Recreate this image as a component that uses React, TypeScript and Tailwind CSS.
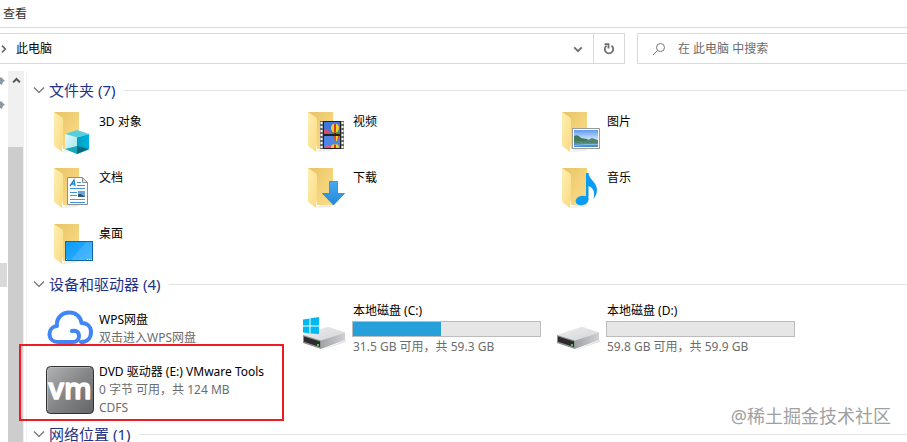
import React, { useState } from 'react';

type FolderKind = 'objects' | 'video' | 'picture' | 'document' | 'download' | 'music' | 'desktop';

interface Folder {
  name: string;
  kind: FolderKind;
}

const FOLDERS: Folder[] = [
  { name: '3D 对象', kind: 'objects' },
  { name: '视频', kind: 'video' },
  { name: '图片', kind: 'picture' },
  { name: '文档', kind: 'document' },
  { name: '下载', kind: 'download' },
  { name: '音乐', kind: 'music' },
  { name: '桌面', kind: 'desktop' },
];

// Gradients shared by all icons
const IconDefs: React.FC = () => (
  <svg width="0" height="0" className="absolute" aria-hidden="true">
    <defs>
      <linearGradient id="folderBack" x1="0" y1="0" x2="1" y2="1">
        <stop offset="0" stopColor="#e9c365" />
        <stop offset="1" stopColor="#fbdf8c" />
      </linearGradient>
      <linearGradient id="folderFlap" x1="0" y1="0" x2="1" y2="1">
        <stop offset="0" stopColor="#ffefb4" />
        <stop offset="1" stopColor="#f9da80" />
      </linearGradient>
      <linearGradient id="cubeLeft" x1="0" y1="0" x2="1" y2="1">
        <stop offset="0" stopColor="#e2fafb" />
        <stop offset="1" stopColor="#9be5ee" />
      </linearGradient>
      <linearGradient id="cubeRight" x1="0" y1="0" x2="1" y2="0">
        <stop offset="0" stopColor="#009fbd" />
        <stop offset="1" stopColor="#00b3e3" />
      </linearGradient>
      <linearGradient id="sky" x1="0" y1="0" x2="0" y2="1">
        <stop offset="0" stopColor="#5c9af0" />
        <stop offset="0.6" stopColor="#d9ebfb" />
        <stop offset="1" stopColor="#4f92c8" />
      </linearGradient>
      <linearGradient id="arrow" x1="0" y1="0" x2="0" y2="1">
        <stop offset="0" stopColor="#46aaf0" />
        <stop offset="1" stopColor="#2189dd" />
      </linearGradient>
      <linearGradient id="screen" x1="0" y1="0" x2="1" y2="1">
        <stop offset="0" stopColor="#0a9bfa" />
        <stop offset="1" stopColor="#35b0ff" />
      </linearGradient>
      <linearGradient id="driveTop" x1="0" y1="0" x2="1" y2="1">
        <stop offset="0" stopColor="#eeeef0" />
        <stop offset="1" stopColor="#d3d4d7" />
      </linearGradient>
      <linearGradient id="driveSide" x1="0" y1="0" x2="1" y2="0">
        <stop offset="0" stopColor="#a2a3a6" />
        <stop offset="1" stopColor="#cfd0d3" />
      </linearGradient>
      <linearGradient id="vmBody" x1="0" y1="0" x2="1" y2="1">
        <stop offset="0" stopColor="#b2b3b5" />
        <stop offset="0.5" stopColor="#858688" />
        <stop offset="1" stopColor="#636466" />
      </linearGradient>
    </defs>
  </svg>
);

const FolderBadge: React.FC<{ kind: FolderKind }> = ({ kind }) => {
  switch (kind) {
    case 'objects':
      return (
        <g>
          <path d="M19 41l12 5 14-4-4-2z" fill="#e3e3e3" />
          <path d="M31 22l12 4-12 3.5L19 26z" fill="#55cfe0" />
          <path d="M19 26l12 3.5V46l-12-5z" fill="url(#cubeLeft)" />
          <path d="M43 26l-12 3.5V46l12-5z" fill="url(#cubeRight)" />
          <path d="M31 38l-12 3 12 5z" fill="#17a9b5" />
          <path d="M31 38l12 3-12 5z" fill="#006b80" />
        </g>
      );
    case 'video':
      return (
        <g>
          <rect x="20" y="13" width="24" height="28" fill="#6b6b6b" />
          <rect x="23" y="13" width="18" height="28" fill="#222" />
          <rect x="24" y="14" width="16" height="12" fill="#3c78dc" />
          <rect x="24" y="28" width="16" height="12" fill="#4b88e6" />
          <path d="M24 22q3-2 5 1l3 3h-8z" fill="#d04f77" />
          <path d="M29 26q5-4 11-2v2z" fill="#3f963c" />
          <ellipse cx="35" cy="20" rx="4" ry="4.5" fill="#f4cf24" />
          <path d="M34 15.500h2v9h-2z" fill="#d9352c" />
          <path d="M34 25h2v1h-2z" fill="#442c20" />
          <path d="M33 28h7l-3 5h-2z" fill="#e24635" />
          <path d="M36 28h2l-1 5h-1z" fill="#f5d62f" />
          <path d="M24 39q4-3 8-1v2h-8z" fill="#e6548c" />
          <path d="M31 40a4 4 0 0 1 8 0z" fill="#f4cf24" />
          <path d="M34 36.500h2V40h-2z" fill="#d9352c" />
          <path d="M21.500 14v27M42.500 14v27" stroke="#fafafa" strokeWidth="2" strokeDasharray="2 2" />
        </g>
      );
    case 'picture':
      return (
        <g>
          <rect x="18.500" y="20.500" width="27" height="20" fill="#fff" stroke="#9b9b9b" />
          <rect x="20" y="22" width="24" height="17" fill="url(#sky)" />
          <path d="M20 28q4-2 7 2l6 1 5 3h-18z" fill="#3f7a5c" />
          <path d="M32 33l6-3 6 2v3H20v-2z" fill="#52856f" />
          <path d="M20 35h24v4H20z" fill="#4c8ec6" />
          <path d="M20 37.500l12-1h12" stroke="#88bde4" fill="none" />
        </g>
      );
    case 'document':
      return (
        <g>
          <path d="M21.500 13.500h15l5 5v22h-20z" fill="#fff" stroke="#8c8c8c" />
          <path d="M36.500 13.500v5h5z" fill="#e8e8e8" stroke="#8c8c8c" />
          <path d="M24 22l4-6 1 6M25.500 20h3" stroke="#1d83cf" strokeWidth="1.400" fill="none" />
          <path d="M31 18.500h4M31 21.500h8M24 24.500h15M24 28.500h7M24 31.500h7M24 38.500h15" stroke="#3d96d8" />
          <path d="M24 35.500h15" stroke="#8b8b8b" />
          <rect x="32" y="27" width="7" height="6" fill="#6fa7dc" />
          <path d="M32 30l3 0 4 3h-7z" fill="#2e5871" />
        </g>
      );
    case 'download':
      return <path d="M29.500 17.500h8v12h7L33.500 41 22.500 29.500h7z" fill="url(#arrow)" stroke="#1c7cc9" strokeWidth="0.700" />;
    case 'music':
      return (
        <g fill="#0a9bf5">
          <ellipse cx="28" cy="36.500" rx="6.500" ry="4.700" transform="rotate(-12 28 36.5)" />
          <path d="M32 9h2.500c0 6 8.500 9 8.500 17 0 4-2 7-3.500 9 1.500-6 .5-11-5-13v14H32z" />
        </g>
      );
    default:
      return (
        <g>
          <rect x="19.500" y="21.500" width="27" height="19" fill="url(#screen)" stroke="#0b68aa" />
          <path d="M25 40L40 22h6v18z" fill="#fff" opacity="0.120" />
          <path d="M20 39.500h1M41 39.500h1M43 39.500h1M45 39.500h1" stroke="#fff" />
        </g>
      );
  }
};

const FolderIcon: React.FC<{ kind: FolderKind }> = ({ kind }) => (
  <svg viewBox="0 0 48 48" className="w-12 h-12 shrink-0" aria-hidden="true">
    <path d="M16 44l4-3h14l-3 2z" fill="#ededed" />
    <path d="M8 4h25v37H16z" fill="url(#folderBack)" />
    <path d="M8 4l7.500 5q1.500 1 1.500 3v25l-1 1v6L8 38z" fill="url(#folderFlap)" />
    <path d="M16 38l1-1v4l-1 3z" fill="#fff6dc" />
    <FolderBadge kind={kind} />
  </svg>
);

const DriveIcon: React.FC<{ system?: boolean }> = ({ system }) => (
  <svg viewBox="0 0 48 48" className="w-12 h-12 shrink-0" aria-hidden="true">
    <path d="M21 45l25-8v-2z" fill="#e4e4e4" />
    <path d="M3 30l24-8q1-.4 2 0l16 5.500-24 8z" fill="url(#driveTop)" />
    <path d="M21 35.500l24-8V35l-24 9z" fill="url(#driveSide)" />
    <path d="M3 30l18 5.500V44L3 38z" fill="#8d8e90" />
    <path d="M4 31.500l16 5v5.500L4 36.800z" fill="#2b2b2c" />
    <path d="M17 39h2v2h-2z" fill="#35d63a" />
    {system && (
      <path
        d="M3 14.500l6.500-1v7H3zM10.500 13.300L19 12v8.500h-8.500zM3 21.500h6.500v7L3 27.500zM10.500 21.500H19V29l-8.500-.6z"
        fill="#00b9f1"
      />
    )}
  </svg>
);

const CloudIcon: React.FC = () => (
  <svg viewBox="0 0 48 48" className="w-12 h-12 shrink-0" aria-hidden="true">
    <path
      d="M26 26c4-1 7 1 7 5 0 3-2 6-6 6H12C7 37 3.500 34 3.500 29c0-4 3-7.500 7.500-8C10 13 16 7.500 23.500 7.500c6 0 11 4 12 10.500 6 0 9.500 4 9.500 9 0 6-4 10-10 10"
      fill="none"
      stroke="#4285f4"
      strokeWidth="4"
      strokeLinecap="round"
      strokeLinejoin="round"
    />
  </svg>
);

const VmwareIcon: React.FC = () => (
  <svg viewBox="0 0 48 48" className="w-12 h-12 shrink-0" aria-hidden="true">
    <rect x="0.500" y="0.500" width="47" height="47" rx="4" fill="url(#vmBody)" stroke="#303133" />
    <path d="M4 1.500h40M1.500 4v40" stroke="#c9cacb" opacity="0.600" />
    <text
      x="24"
      y="33"
      textAnchor="middle"
      className="font-['Open_Sans',sans-serif] text-[29px] font-semibold"
      fill="#fff"
      stroke="#fff"
      strokeWidth="1.400"
      strokeLinejoin="round"
    >
      vm
    </text>
  </svg>
);

const Chevron: React.FC<{ className: string; d: string; width: number }> = ({ className, d, width }) => (
  <svg viewBox="0 0 12 12" className={className} fill="none" stroke="currentColor" strokeWidth={width} aria-hidden="true">
    <path d={d} />
  </svg>
);

interface GroupProps {
  title: string;
  count: number;
  children?: React.ReactNode;
}

const Group: React.FC<GroupProps> = ({ title, count, children }) => {
  const [open, setOpen] = useState(true);

  return (
    <section>
      <h2 className="flex items-center gap-2 pl-[6px]">
        <button
          onClick={() => setOpen(!open)}
          aria-expanded={open}
          className="flex items-center gap-1 h-5 text-[15px] leading-5 text-[#1e3287] whitespace-nowrap"
        >
          <Chevron className="w-3 h-3 text-[#6e6e6e]" d="M1 3.500l5 5 5-5" width={1.2} />
          {title} ({count})
        </button>
        <span className="h-px flex-1 bg-[#e2e2e2]" />
      </h2>
      {open && children}
    </section>
  );
};

const Capacity: React.FC<{ name: string; total: number; free: number; system?: boolean }> = ({ name, total, free, system }) => {
  const used = (total - free) / total;
  const percent = used < 0.01 ? 0 : used * 100;

  return (
    <li className="flex items-center gap-1 h-[54px]">
      <DriveIcon system={system} />
      <div className="w-[189px]">
        <p className="px-px">{name}</p>
        <div
          role="meter"
          aria-label={name}
          aria-valuemin={0}
          aria-valuemax={100}
          aria-valuenow={Math.round(percent)}
          className="h-4 my-px border border-[#bcbcbc] bg-[#e6e6e6]"
        >
          <div className="h-full bg-[#26a0da]" style={{ width: `${percent}%` }} />
        </div>
        <p className="px-px text-[#6d6d6d] whitespace-nowrap">
          {free} GB 可用，共 {total} GB
        </p>
      </div>
    </li>
  );
};

const Toolbar: React.FC = () => {
  const [query, setQuery] = useState('');

  return (
    <header>
      <nav className="flex h-7 items-center border-b border-[#dadada] px-[3px]">
        <button className="text-[#333]">查看</button>
      </nav>
      <div className="grid grid-cols-[625fr_270fr] h-[31px] mt-[5px] mb-[7px] gap-3">
        <div className="flex min-w-0 border border-l-0 border-[#d9d9d9]">
          <div className="flex flex-1 items-center gap-2">
            <Chevron className="w-2 h-2 text-[#666]" d="M3 1l5 5-5 5" width={2.4} />
            <span>此电脑</span>
          </div>
          <button aria-label="历史记录" className="flex w-[30px] items-center justify-center text-[#707070]">
            <Chevron className="w-[10px] h-[10px]" d="M1.500 4l4.500 4.500L10.500 4" width={2.4} />
          </button>
          <button
            aria-label="刷新"
            className="flex w-[31px] items-center justify-center border-l border-[#d9d9d9] text-[#707070]"
          >
            <svg viewBox="0 0 12 12" className="w-3 h-3" fill="none" stroke="currentColor" strokeWidth="1.800" aria-hidden="true">
              <path d="M8.500 2.800A4.200 4.200 0 1 1 3.500 2.800" />
              <path d="M1.500 1.200H5.500V5.500" />
            </svg>
          </button>
        </div>
        <label className="flex min-w-0 items-center gap-3 border border-r-0 border-[#d9d9d9] pl-[14px]">
          <svg viewBox="0 0 14 14" className="w-[14px] h-[14px] shrink-0" fill="none" stroke="#777" aria-hidden="true">
            <circle cx="8.500" cy="5.500" r="4" />
            <path d="M5.500 8.500L1 13" />
          </svg>
          <input
            type="text"
            aria-label="搜索"
            value={query}
            onChange={(e) => setQuery(e.target.value)}
            placeholder="在 此电脑 中搜索"
            className="flex-1 min-w-0 outline-none placeholder:text-[#6b6b6b]"
          />
        </label>
      </div>
    </header>
  );
};

const Pin: React.FC = () => (
  <svg viewBox="0 0 5 10" className="w-[5px] h-[10px]" fill="#8a9aa5" aria-hidden="true">
    <path d="M0 1l1-1 4 4-2 1-1 3-2-1z" />
  </svg>
);

// Edge of the navigation pane together with its scrollbar
const NavigationEdge: React.FC = () => (
  <aside className="flex shrink-0 border-r border-[#f3f3f3] pr-[2px]">
    <div className="flex w-2 flex-col">
      <div className="flex flex-col gap-[14px] pt-[6px]">
        <Pin />
        <Pin />
      </div>
      <div className="mt-[152px] h-6 w-[7px] bg-[#d9d9d9]" />
    </div>
    <div className="flex w-4 flex-col bg-[#f0f0f0]">
      <button aria-label="向上滚动" className="flex h-[18px] items-center justify-center text-[#555]">
        <Chevron className="w-[9px] h-[9px]" d="M1.500 8.500L6 4l4.500 4.500" width={2.6} />
      </button>
      <div className="mt-[58px] w-[15px] flex-1 bg-[#cdcdcd]" />
    </div>
  </aside>
);

const App: React.FC = () => {
  return (
    <div className="relative flex h-screen flex-col overflow-hidden bg-white text-xs leading-[18px] text-black font-['Noto_Sans','Noto_Sans_CJK_SC',sans-serif]">
      <IconDefs />
      <Toolbar />

      <div className="flex min-h-0 flex-1">
        <NavigationEdge />

        <main className="min-w-0 flex-1 pt-[9px]">
          <Group title="文件夹" count={7}>
            <ul className="grid grid-cols-[repeat(auto-fill,254px)] gap-y-2 pt-2 pb-[6px] pl-[19px]">
              {FOLDERS.map((folder) => (
                <li key={folder.kind} className="flex items-start gap-[5px]">
                  <FolderIcon kind={folder.kind} />
                  <span className="pt-[5px]">{folder.name}</span>
                </li>
              ))}
            </ul>
          </Group>

          <Group title="设备和驱动器" count={4}>
            <ul className="grid grid-cols-[repeat(auto-fill,254px)] gap-y-[7px] pt-2 pb-[7px] pl-[19px]">
              <li className="flex h-[54px] items-center gap-[5px]">
                <CloudIcon />
                <div>
                  <p>WPS网盘</p>
                  <p className="text-[#6d6d6d]">双击进入WPS网盘</p>
                </div>
              </li>
              <Capacity name="本地磁盘 (C:)" total={59.3} free={31.5} system />
              <Capacity name="本地磁盘 (D:)" total={59.9} free={59.8} />
              <li className="relative flex h-[54px] items-center gap-[5px]">
                <VmwareIcon />
                <div className="whitespace-nowrap">
                  <p>DVD 驱动器 (E:) VMware Tools</p>
                  <p className="text-[#6d6d6d]">0 字节 可用，共 124 MB</p>
                  <p className="text-[#6d6d6d]">CDFS</p>
                </div>
                {/* Highlight frame */}
                <span className="absolute -top-[19px] -left-[27px] h-[77px] w-[265px] border-2 border-[#ed1c24]" />
              </li>
            </ul>
          </Group>

          <Group title="网络位置" count={1} />
        </main>
      </div>

      <p className="absolute right-4 bottom-3 text-lg leading-7 text-[#a0a0a0] [text-shadow:0_0_2px_#fff]">@稀土掘金技术社区</p>
    </div>
  );
};

export default App;
